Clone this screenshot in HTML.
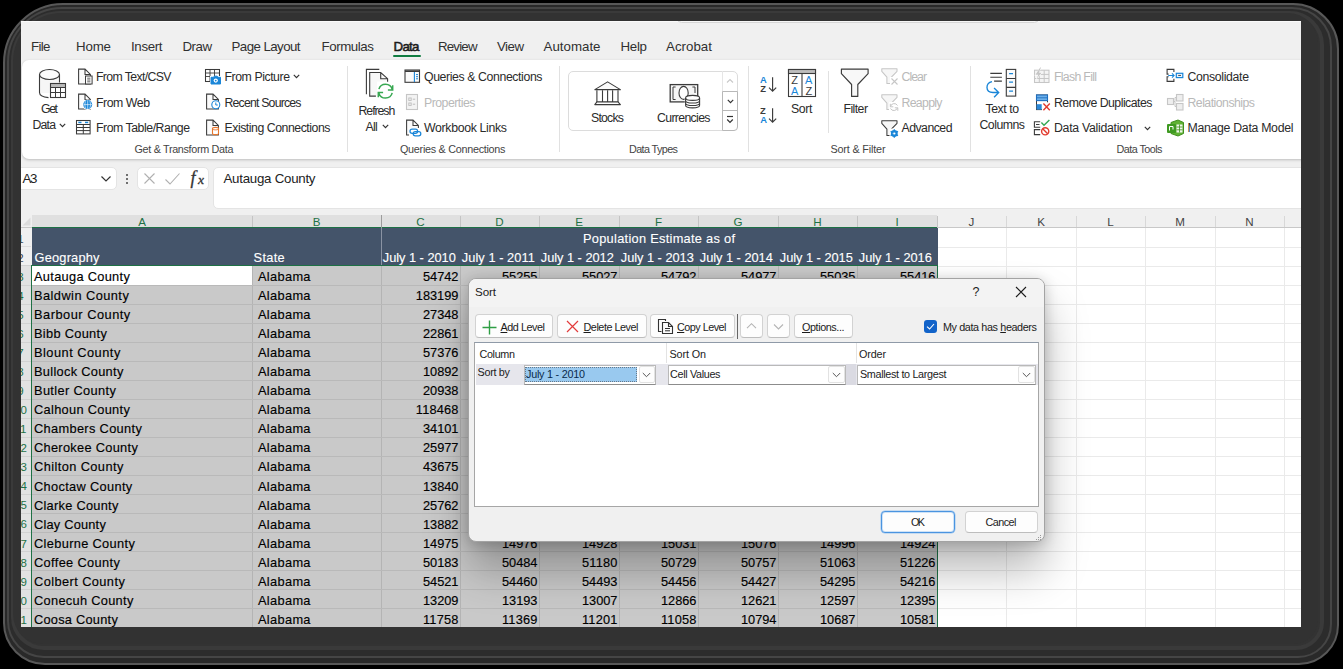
<!DOCTYPE html>
<html><head><meta charset="utf-8"><title>Sort</title>
<style>
*{box-sizing:border-box;margin:0;padding:0}
html,body{width:1343px;height:669px;overflow:hidden;background:#000}
body{font-family:"Liberation Sans",sans-serif;color:#242424;position:relative}
#frame{position:absolute;left:3px;top:3px;width:1336px;height:662px;border-radius:60px 46px 40px 42px;background:#292929;border:2px solid #585858;filter:blur(.5px)}
#f2{position:absolute;left:7px;top:7px;width:1325px;height:651px;border-radius:55px 40px 34px 37px;background:#2c2c2c;border:2.5px solid #454545;filter:blur(.7px)}
#f3{position:absolute;left:11px;top:11px;width:1313px;height:639px;border-radius:50px 34px 28px 33px;background:#333;border:4px solid #3a3a3a;filter:blur(.7px)}
#f4{position:absolute;left:13px;top:13px;width:1305px;height:631px;border-radius:48px 30px 24px 30px;background:#323232}
#app{position:absolute;left:21px;top:21px;width:1280px;height:606px;background:#f0f0f0;overflow:hidden}
#in{position:absolute;left:-21px;top:-21px;width:1343px;height:669px}
.t{position:absolute;white-space:nowrap;color:#242424}
.b{position:absolute}
.dis{color:#b8b8b8}
.u{text-decoration:underline;text-underline-offset:1px}

</style></head>
<body>
<div id="frame"></div><div id="f2"></div><div id="f3"></div><div id="f4"></div>
<div id="app"><div id="in">
<div class="b " style="left:21px;top:21px;width:1299px;height:1px;background:#fafafa"></div>
<div class="b " style="left:677px;top:14px;width:362px;height:9px;background:#f7f7f7;border:1px solid #d6d6d6;border-radius:5px"></div>
<div class="t " style="top:38.26px;font-size:13.3px;line-height:17px;letter-spacing:-0.644px;color:#303030;left:31.00px;">File</div>
<div class="t " style="top:38.26px;font-size:13.3px;line-height:17px;letter-spacing:-0.159px;color:#303030;left:76.00px;">Home</div>
<div class="t " style="top:38.26px;font-size:13.3px;line-height:17px;letter-spacing:-0.353px;color:#303030;left:131.00px;">Insert</div>
<div class="t " style="top:38.26px;font-size:13.3px;line-height:17px;letter-spacing:-0.512px;color:#303030;left:182.50px;">Draw</div>
<div class="t " style="top:38.26px;font-size:13.3px;line-height:17px;letter-spacing:-0.569px;color:#303030;left:231.50px;">Page Layout</div>
<div class="t " style="top:38.26px;font-size:13.3px;line-height:17px;letter-spacing:-0.418px;color:#303030;left:321.50px;">Formulas</div>
<div class="t " style="top:38.26px;font-size:13.3px;line-height:17px;letter-spacing:-0.698px;color:#1a1a1a;-webkit-text-stroke:0.55px #1a1a1a;left:393.50px;">Data</div>
<div class="t " style="top:38.26px;font-size:13.3px;line-height:17px;letter-spacing:-0.822px;color:#303030;left:438.00px;">Review</div>
<div class="t " style="top:38.26px;font-size:13.3px;line-height:17px;letter-spacing:-0.529px;color:#303030;left:497.00px;">View</div>
<div class="t " style="top:38.26px;font-size:13.3px;line-height:17px;letter-spacing:0.010px;color:#303030;left:543.50px;">Automate</div>
<div class="t " style="top:38.26px;font-size:13.3px;line-height:17px;letter-spacing:-0.285px;color:#303030;left:620.50px;">Help</div>
<div class="t " style="top:38.26px;font-size:13.3px;line-height:17px;letter-spacing:0.027px;color:#303030;left:666.00px;">Acrobat</div>
<div class="b " style="left:393px;top:55px;width:27.5px;height:2px;background:#107c41;border-radius:1px"></div>
<div class="b " style="left:21.5px;top:60px;width:1298.5px;height:99px;background:#fff;border-radius:7px;box-shadow:0 1px 3px rgba(0,0,0,.22)"></div>
<div class="b " style="left:347px;top:66px;width:1px;height:86px;background:#e1e1e1"></div>
<div class="b " style="left:559px;top:66px;width:1px;height:86px;background:#e1e1e1"></div>
<div class="b " style="left:748px;top:66px;width:1px;height:86px;background:#e1e1e1"></div>
<div class="b " style="left:969.5px;top:66px;width:1.0px;height:86px;background:#e1e1e1"></div>
<div class="b " style="left:828px;top:71px;width:1px;height:62px;background:#e1e1e1"></div>
<div class="b " style="left:15px;top:167px;width:102px;height:23px;background:#fff;border-radius:0 5px 5px 0;border:1px solid #e4e4e4"></div>
<div class="t " style="top:170.26px;font-size:13.3px;line-height:17px;letter-spacing:-1.268px;color:#222;left:22.50px;">A3</div>
<svg class="b" style="left:100px;top:174px;" width="12" height="10" viewBox="0 0 12 10" fill="none"><path d="M1.5 2.5 L6 7 L10.5 2.5" stroke="#333" stroke-width="1.2"/></svg>
<div class="b " style="left:126px;top:174px;width:2px;height:2px;background:#444;border-radius:1px"></div>
<div class="b " style="left:126px;top:178px;width:2px;height:2px;background:#444;border-radius:1px"></div>
<div class="b " style="left:126px;top:182px;width:2px;height:2px;background:#444;border-radius:1px"></div>
<div class="b " style="left:137px;top:167px;width:72px;height:23px;background:#fff;border-radius:5px;border:1px solid #e4e4e4"></div>
<svg class="b" style="left:143px;top:172px;" width="14" height="14" viewBox="0 0 14 14" fill="none"><path d="M1.5 1.5 L11.5 11.5 M11.5 1.5 L1.5 11.5" stroke="#b0b0b0" stroke-width="1.1"/></svg>
<svg class="b" style="left:164px;top:172px;" width="18" height="14" viewBox="0 0 18 14" fill="none"><path d="M1.5 7.5 L6 12 L15.5 1.5" stroke="#b0b0b0" stroke-width="1.1"/></svg>
<div class="t " style="top:167.44px;font-size:18px;line-height:23px;color:#333;-webkit-text-stroke:0.3px #333;left:190.50px;font-family:'Liberation Serif',serif;font-style:italic;">f</div>
<div class="t " style="top:171.13px;font-size:13.5px;line-height:18px;color:#333;-webkit-text-stroke:0.3px #333;left:198.00px;font-family:'Liberation Serif',serif;font-style:italic;">x</div>
<div class="b " style="left:213px;top:167px;width:1107px;height:41.5px;background:#fff;border-radius:5px 0 0 5px;border:1px solid #e4e4e4"></div>
<div class="t " style="top:170.26px;font-size:13.3px;line-height:17px;letter-spacing:-0.260px;color:#222;left:223.50px;">Autauga County</div>
<div class="b " style="left:21px;top:215px;width:1299px;height:425px;background:#fff"></div>
<div class="b " style="left:21px;top:215px;width:1299px;height:13px;background:#f0f0f0"></div>
<div class="b " style="left:32px;top:215px;width:905px;height:12px;background:#e0e0e0"></div>
<div class="b " style="left:21px;top:227px;width:1299px;height:1px;background:#c8c8c8"></div>
<div class="b " style="left:32px;top:227px;width:905px;height:1px;background:#1e7145"></div>
<svg class="b" style="left:21px;top:215px;" width="11" height="12" viewBox="0 0 11 12" fill="none"><path d="M9.5 2.5 L9.5 10.5 L1.5 10.5 Z" fill="#dcdcdc"/></svg>
<div class="t " style="top:214.45px;font-size:11.6px;line-height:15px;color:#1e7145;left:-158.00px;width:600px;text-align:center;">A</div>
<div class="b " style="left:252px;top:216px;width:1px;height:11px;background:#c4c4c4"></div>
<div class="t " style="top:214.45px;font-size:11.6px;line-height:15px;color:#1e7145;left:16.50px;width:600px;text-align:center;">B</div>
<div class="b " style="left:381px;top:216px;width:1px;height:11px;background:#c4c4c4"></div>
<div class="t " style="top:214.45px;font-size:11.6px;line-height:15px;color:#1e7145;left:120.50px;width:600px;text-align:center;">C</div>
<div class="b " style="left:460px;top:216px;width:1px;height:11px;background:#c4c4c4"></div>
<div class="t " style="top:214.45px;font-size:11.6px;line-height:15px;color:#1e7145;left:199.50px;width:600px;text-align:center;">D</div>
<div class="b " style="left:539px;top:216px;width:1px;height:11px;background:#c4c4c4"></div>
<div class="t " style="top:214.45px;font-size:11.6px;line-height:15px;color:#1e7145;left:279.00px;width:600px;text-align:center;">E</div>
<div class="b " style="left:619px;top:216px;width:1px;height:11px;background:#c4c4c4"></div>
<div class="t " style="top:214.45px;font-size:11.6px;line-height:15px;color:#1e7145;left:358.50px;width:600px;text-align:center;">F</div>
<div class="b " style="left:698px;top:216px;width:1px;height:11px;background:#c4c4c4"></div>
<div class="t " style="top:214.45px;font-size:11.6px;line-height:15px;color:#1e7145;left:438.00px;width:600px;text-align:center;">G</div>
<div class="b " style="left:778px;top:216px;width:1px;height:11px;background:#c4c4c4"></div>
<div class="t " style="top:214.45px;font-size:11.6px;line-height:15px;color:#1e7145;left:517.50px;width:600px;text-align:center;">H</div>
<div class="b " style="left:857px;top:216px;width:1px;height:11px;background:#c4c4c4"></div>
<div class="t " style="top:214.45px;font-size:11.6px;line-height:15px;color:#1e7145;left:597.00px;width:600px;text-align:center;">I</div>
<div class="b " style="left:937px;top:216px;width:1px;height:11px;background:#c4c4c4"></div>
<div class="t " style="top:214.45px;font-size:11.6px;line-height:15px;color:#444;left:671.50px;width:600px;text-align:center;">J</div>
<div class="b " style="left:1006px;top:216px;width:1px;height:11px;background:#d8d8d8"></div>
<div class="t " style="top:214.45px;font-size:11.6px;line-height:15px;color:#444;left:741.00px;width:600px;text-align:center;">K</div>
<div class="b " style="left:1076px;top:216px;width:1px;height:11px;background:#d8d8d8"></div>
<div class="t " style="top:214.45px;font-size:11.6px;line-height:15px;color:#444;left:810.50px;width:600px;text-align:center;">L</div>
<div class="b " style="left:1145px;top:216px;width:1px;height:11px;background:#d8d8d8"></div>
<div class="t " style="top:214.45px;font-size:11.6px;line-height:15px;color:#444;left:880.00px;width:600px;text-align:center;">M</div>
<div class="b " style="left:1215px;top:216px;width:1px;height:11px;background:#d8d8d8"></div>
<div class="t " style="top:214.45px;font-size:11.6px;line-height:15px;color:#444;left:949.50px;width:600px;text-align:center;">N</div>
<div class="b " style="left:1284px;top:216px;width:1px;height:11px;background:#d8d8d8"></div>
<div class="b " style="left:21px;top:228px;width:11px;height:412px;background:#f0f0f0"></div>
<div class="b " style="left:21px;top:266px;width:10px;height:374px;background:#e2e2e2"></div>
<div class="b " style="left:937px;top:228px;width:1px;height:412px;background:#eaeaea"></div>
<div class="b " style="left:1006px;top:228px;width:1px;height:412px;background:#eaeaea"></div>
<div class="b " style="left:1076px;top:228px;width:1px;height:412px;background:#eaeaea"></div>
<div class="b " style="left:1145px;top:228px;width:1px;height:412px;background:#eaeaea"></div>
<div class="b " style="left:1215px;top:228px;width:1px;height:412px;background:#eaeaea"></div>
<div class="b " style="left:1284px;top:228px;width:1px;height:412px;background:#eaeaea"></div>
<div class="b " style="left:938px;top:247px;width:382px;height:1px;background:#eaeaea"></div>
<div class="b " style="left:938px;top:266px;width:382px;height:1px;background:#eaeaea"></div>
<div class="b " style="left:938px;top:285px;width:382px;height:1px;background:#eaeaea"></div>
<div class="b " style="left:938px;top:304px;width:382px;height:1px;background:#eaeaea"></div>
<div class="b " style="left:938px;top:323px;width:382px;height:1px;background:#eaeaea"></div>
<div class="b " style="left:938px;top:342px;width:382px;height:1px;background:#eaeaea"></div>
<div class="b " style="left:938px;top:361px;width:382px;height:1px;background:#eaeaea"></div>
<div class="b " style="left:938px;top:380px;width:382px;height:1px;background:#eaeaea"></div>
<div class="b " style="left:938px;top:399px;width:382px;height:1px;background:#eaeaea"></div>
<div class="b " style="left:938px;top:418px;width:382px;height:1px;background:#eaeaea"></div>
<div class="b " style="left:938px;top:437px;width:382px;height:1px;background:#eaeaea"></div>
<div class="b " style="left:938px;top:456px;width:382px;height:1px;background:#eaeaea"></div>
<div class="b " style="left:938px;top:475px;width:382px;height:1px;background:#eaeaea"></div>
<div class="b " style="left:938px;top:494px;width:382px;height:1px;background:#eaeaea"></div>
<div class="b " style="left:938px;top:513px;width:382px;height:1px;background:#eaeaea"></div>
<div class="b " style="left:938px;top:532px;width:382px;height:1px;background:#eaeaea"></div>
<div class="b " style="left:938px;top:551px;width:382px;height:1px;background:#eaeaea"></div>
<div class="b " style="left:938px;top:570px;width:382px;height:1px;background:#eaeaea"></div>
<div class="b " style="left:938px;top:589px;width:382px;height:1px;background:#eaeaea"></div>
<div class="b " style="left:938px;top:608px;width:382px;height:1px;background:#eaeaea"></div>
<div class="b " style="left:938px;top:627px;width:382px;height:1px;background:#eaeaea"></div>
<div class="b " style="left:938px;top:646px;width:382px;height:1px;background:#eaeaea"></div>
<div class="b " style="left:31.5px;top:228px;width:906.0px;height:37px;background:#44546a"></div>
<div class="b " style="left:380.5px;top:215px;width:1.5px;height:13px;background:#9c9c9c"></div>
<div class="b " style="left:380.5px;top:228px;width:1.5px;height:37px;background:#8a93a3"></div>
<div class="b " style="left:32px;top:266px;width:905px;height:374px;background:#c9c9c9"></div>
<div class="b " style="left:32px;top:266px;width:220px;height:19px;background:#fff"></div>
<div class="b " style="left:252px;top:266px;width:1px;height:374px;background:#b4b4b4"></div>
<div class="b " style="left:381px;top:266px;width:1px;height:374px;background:#b4b4b4"></div>
<div class="b " style="left:460px;top:266px;width:1px;height:374px;background:#b4b4b4"></div>
<div class="b " style="left:539px;top:266px;width:1px;height:374px;background:#b4b4b4"></div>
<div class="b " style="left:619px;top:266px;width:1px;height:374px;background:#b4b4b4"></div>
<div class="b " style="left:698px;top:266px;width:1px;height:374px;background:#b4b4b4"></div>
<div class="b " style="left:778px;top:266px;width:1px;height:374px;background:#b4b4b4"></div>
<div class="b " style="left:857px;top:266px;width:1px;height:374px;background:#b4b4b4"></div>
<div class="b " style="left:32px;top:285px;width:905px;height:1px;background:#b9b9b9"></div>
<div class="b " style="left:21px;top:285px;width:10px;height:1px;background:#d2d2d2"></div>
<div class="b " style="left:32px;top:304px;width:905px;height:1px;background:#b9b9b9"></div>
<div class="b " style="left:21px;top:304px;width:10px;height:1px;background:#d2d2d2"></div>
<div class="b " style="left:32px;top:323px;width:905px;height:1px;background:#b9b9b9"></div>
<div class="b " style="left:21px;top:323px;width:10px;height:1px;background:#d2d2d2"></div>
<div class="b " style="left:32px;top:342px;width:905px;height:1px;background:#b9b9b9"></div>
<div class="b " style="left:21px;top:342px;width:10px;height:1px;background:#d2d2d2"></div>
<div class="b " style="left:32px;top:361px;width:905px;height:1px;background:#b9b9b9"></div>
<div class="b " style="left:21px;top:361px;width:10px;height:1px;background:#d2d2d2"></div>
<div class="b " style="left:32px;top:380px;width:905px;height:1px;background:#b9b9b9"></div>
<div class="b " style="left:21px;top:380px;width:10px;height:1px;background:#d2d2d2"></div>
<div class="b " style="left:32px;top:399px;width:905px;height:1px;background:#b9b9b9"></div>
<div class="b " style="left:21px;top:399px;width:10px;height:1px;background:#d2d2d2"></div>
<div class="b " style="left:32px;top:418px;width:905px;height:1px;background:#b9b9b9"></div>
<div class="b " style="left:21px;top:418px;width:10px;height:1px;background:#d2d2d2"></div>
<div class="b " style="left:32px;top:437px;width:905px;height:1px;background:#b9b9b9"></div>
<div class="b " style="left:21px;top:437px;width:10px;height:1px;background:#d2d2d2"></div>
<div class="b " style="left:32px;top:456px;width:905px;height:1px;background:#b9b9b9"></div>
<div class="b " style="left:21px;top:456px;width:10px;height:1px;background:#d2d2d2"></div>
<div class="b " style="left:32px;top:475px;width:905px;height:1px;background:#b9b9b9"></div>
<div class="b " style="left:21px;top:475px;width:10px;height:1px;background:#d2d2d2"></div>
<div class="b " style="left:32px;top:494px;width:905px;height:1px;background:#b9b9b9"></div>
<div class="b " style="left:21px;top:494px;width:10px;height:1px;background:#d2d2d2"></div>
<div class="b " style="left:32px;top:513px;width:905px;height:1px;background:#b9b9b9"></div>
<div class="b " style="left:21px;top:513px;width:10px;height:1px;background:#d2d2d2"></div>
<div class="b " style="left:32px;top:532px;width:905px;height:1px;background:#b9b9b9"></div>
<div class="b " style="left:21px;top:532px;width:10px;height:1px;background:#d2d2d2"></div>
<div class="b " style="left:32px;top:551px;width:905px;height:1px;background:#b9b9b9"></div>
<div class="b " style="left:21px;top:551px;width:10px;height:1px;background:#d2d2d2"></div>
<div class="b " style="left:32px;top:570px;width:905px;height:1px;background:#b9b9b9"></div>
<div class="b " style="left:21px;top:570px;width:10px;height:1px;background:#d2d2d2"></div>
<div class="b " style="left:32px;top:589px;width:905px;height:1px;background:#b9b9b9"></div>
<div class="b " style="left:21px;top:589px;width:10px;height:1px;background:#d2d2d2"></div>
<div class="b " style="left:32px;top:608px;width:905px;height:1px;background:#b9b9b9"></div>
<div class="b " style="left:21px;top:608px;width:10px;height:1px;background:#d2d2d2"></div>
<div class="b " style="left:32px;top:627px;width:905px;height:1px;background:#b9b9b9"></div>
<div class="b " style="left:21px;top:627px;width:10px;height:1px;background:#d2d2d2"></div>
<div class="b " style="left:32px;top:646px;width:905px;height:1px;background:#b9b9b9"></div>
<div class="b " style="left:21px;top:646px;width:10px;height:1px;background:#d2d2d2"></div>
<div class="b " style="left:21px;top:246px;width:10px;height:1px;background:#dedede"></div>
<div class="b " style="left:21px;top:265px;width:10px;height:1px;background:#d2d2d2"></div>
<div class="b " style="left:31px;top:265px;width:1px;height:375px;background:#1e7145"></div>
<div class="b " style="left:937px;top:265px;width:1px;height:375px;background:#1e7145"></div>
<div class="b " style="left:32px;top:265px;width:906px;height:1.3000000000000114px;background:#1e7145"></div>
<div class="t " style="top:230.08px;font-size:12.8px;line-height:17px;letter-spacing:0.285px;color:#fff;-webkit-text-stroke:0.12px #fff;left:583.00px;">Population Estimate as of</div>
<div class="t " style="top:249.08px;font-size:12.8px;line-height:17px;letter-spacing:0.209px;color:#fff;-webkit-text-stroke:0.12px #fff;left:34.50px;">Geography</div>
<div class="t " style="top:249.08px;font-size:12.8px;line-height:17px;letter-spacing:0.278px;color:#fff;-webkit-text-stroke:0.12px #fff;left:253.60px;">State</div>
<div class="t " style="top:249.08px;font-size:12.8px;line-height:17px;letter-spacing:-0.024px;color:#fff;-webkit-text-stroke:0.12px #fff;left:382.80px;">July 1 - 2010</div>
<div class="t " style="top:249.08px;font-size:12.8px;line-height:17px;letter-spacing:0.055px;color:#fff;-webkit-text-stroke:0.12px #fff;left:461.80px;">July 1 - 2011</div>
<div class="t " style="top:249.08px;font-size:12.8px;line-height:17px;letter-spacing:-0.024px;color:#fff;-webkit-text-stroke:0.12px #fff;left:540.80px;">July 1 - 2012</div>
<div class="t " style="top:249.08px;font-size:12.8px;line-height:17px;letter-spacing:-0.024px;color:#fff;-webkit-text-stroke:0.12px #fff;left:620.80px;">July 1 - 2013</div>
<div class="t " style="top:249.08px;font-size:12.8px;line-height:17px;letter-spacing:-0.024px;color:#fff;-webkit-text-stroke:0.12px #fff;left:699.80px;">July 1 - 2014</div>
<div class="t " style="top:249.08px;font-size:12.8px;line-height:17px;letter-spacing:-0.024px;color:#fff;-webkit-text-stroke:0.12px #fff;left:779.80px;">July 1 - 2015</div>
<div class="t " style="top:249.08px;font-size:12.8px;line-height:17px;letter-spacing:-0.024px;color:#fff;-webkit-text-stroke:0.12px #fff;left:858.80px;">July 1 - 2016</div>
<div class="t " style="top:267.93px;font-size:12.8px;line-height:17px;letter-spacing:0.308px;color:#000;-webkit-text-stroke:0.15px #000;left:34.00px;">Autauga County</div>
<div class="t " style="top:267.93px;font-size:12.8px;line-height:17px;letter-spacing:0.330px;color:#000;-webkit-text-stroke:0.15px #000;left:258.00px;">Alabama</div>
<div class="t " style="top:267.93px;font-size:12.8px;line-height:17px;letter-spacing:-0.049px;color:#000;-webkit-text-stroke:0.15px #000;right:884.65px;">54742</div>
<div class="t " style="top:267.93px;font-size:12.8px;line-height:17px;letter-spacing:-0.049px;color:#000;-webkit-text-stroke:0.15px #000;right:805.65px;">55255</div>
<div class="t " style="top:267.93px;font-size:12.8px;line-height:17px;letter-spacing:-0.049px;color:#000;-webkit-text-stroke:0.15px #000;right:725.65px;">55027</div>
<div class="t " style="top:267.93px;font-size:12.8px;line-height:17px;letter-spacing:-0.049px;color:#000;-webkit-text-stroke:0.15px #000;right:646.65px;">54792</div>
<div class="t " style="top:267.93px;font-size:12.8px;line-height:17px;letter-spacing:-0.049px;color:#000;-webkit-text-stroke:0.15px #000;right:566.65px;">54977</div>
<div class="t " style="top:267.93px;font-size:12.8px;line-height:17px;letter-spacing:-0.049px;color:#000;-webkit-text-stroke:0.15px #000;right:487.65px;">55035</div>
<div class="t " style="top:267.93px;font-size:12.8px;line-height:17px;letter-spacing:-0.049px;color:#000;-webkit-text-stroke:0.15px #000;right:407.65px;">55416</div>
<div class="t " style="top:286.99px;font-size:12.8px;line-height:17px;letter-spacing:0.451px;color:#000;-webkit-text-stroke:0.15px #000;left:34.00px;">Baldwin County</div>
<div class="t " style="top:286.99px;font-size:12.8px;line-height:17px;letter-spacing:0.330px;color:#000;-webkit-text-stroke:0.15px #000;left:258.00px;">Alabama</div>
<div class="t " style="top:286.99px;font-size:12.8px;line-height:17px;letter-spacing:-0.023px;color:#000;-webkit-text-stroke:0.15px #000;right:884.62px;">183199</div>
<div class="t " style="top:286.99px;font-size:12.8px;line-height:17px;letter-spacing:-0.023px;color:#000;-webkit-text-stroke:0.15px #000;right:805.62px;">186659</div>
<div class="t " style="top:286.99px;font-size:12.8px;line-height:17px;letter-spacing:-0.023px;color:#000;-webkit-text-stroke:0.15px #000;right:725.62px;">190396</div>
<div class="t " style="top:286.99px;font-size:12.8px;line-height:17px;letter-spacing:-0.023px;color:#000;-webkit-text-stroke:0.15px #000;right:646.62px;">195126</div>
<div class="t " style="top:286.99px;font-size:12.8px;line-height:17px;letter-spacing:-0.023px;color:#000;-webkit-text-stroke:0.15px #000;right:566.62px;">199713</div>
<div class="t " style="top:286.99px;font-size:12.8px;line-height:17px;letter-spacing:-0.023px;color:#000;-webkit-text-stroke:0.15px #000;right:487.62px;">203709</div>
<div class="t " style="top:286.99px;font-size:12.8px;line-height:17px;letter-spacing:-0.023px;color:#000;-webkit-text-stroke:0.15px #000;right:407.62px;">208563</div>
<div class="t " style="top:306.04px;font-size:12.8px;line-height:17px;letter-spacing:0.511px;color:#000;-webkit-text-stroke:0.15px #000;left:34.00px;">Barbour County</div>
<div class="t " style="top:306.04px;font-size:12.8px;line-height:17px;letter-spacing:0.330px;color:#000;-webkit-text-stroke:0.15px #000;left:258.00px;">Alabama</div>
<div class="t " style="top:306.04px;font-size:12.8px;line-height:17px;letter-spacing:-0.049px;color:#000;-webkit-text-stroke:0.15px #000;right:884.65px;">27348</div>
<div class="t " style="top:306.04px;font-size:12.8px;line-height:17px;letter-spacing:-0.049px;color:#000;-webkit-text-stroke:0.15px #000;right:805.65px;">27326</div>
<div class="t " style="top:306.04px;font-size:12.8px;line-height:17px;letter-spacing:-0.049px;color:#000;-webkit-text-stroke:0.15px #000;right:725.65px;">27132</div>
<div class="t " style="top:306.04px;font-size:12.8px;line-height:17px;letter-spacing:-0.049px;color:#000;-webkit-text-stroke:0.15px #000;right:646.65px;">26938</div>
<div class="t " style="top:306.04px;font-size:12.8px;line-height:17px;letter-spacing:-0.049px;color:#000;-webkit-text-stroke:0.15px #000;right:566.65px;">26763</div>
<div class="t " style="top:306.04px;font-size:12.8px;line-height:17px;letter-spacing:-0.049px;color:#000;-webkit-text-stroke:0.15px #000;right:487.65px;">26270</div>
<div class="t " style="top:306.04px;font-size:12.8px;line-height:17px;letter-spacing:-0.049px;color:#000;-webkit-text-stroke:0.15px #000;right:407.65px;">25965</div>
<div class="t " style="top:325.10px;font-size:12.8px;line-height:17px;letter-spacing:0.307px;color:#000;-webkit-text-stroke:0.15px #000;left:34.00px;">Bibb County</div>
<div class="t " style="top:325.10px;font-size:12.8px;line-height:17px;letter-spacing:0.330px;color:#000;-webkit-text-stroke:0.15px #000;left:258.00px;">Alabama</div>
<div class="t " style="top:325.10px;font-size:12.8px;line-height:17px;letter-spacing:-0.049px;color:#000;-webkit-text-stroke:0.15px #000;right:884.65px;">22861</div>
<div class="t " style="top:325.10px;font-size:12.8px;line-height:17px;letter-spacing:-0.049px;color:#000;-webkit-text-stroke:0.15px #000;right:805.65px;">22733</div>
<div class="t " style="top:325.10px;font-size:12.8px;line-height:17px;letter-spacing:-0.049px;color:#000;-webkit-text-stroke:0.15px #000;right:725.65px;">22642</div>
<div class="t " style="top:325.10px;font-size:12.8px;line-height:17px;letter-spacing:-0.049px;color:#000;-webkit-text-stroke:0.15px #000;right:646.65px;">22512</div>
<div class="t " style="top:325.10px;font-size:12.8px;line-height:17px;letter-spacing:-0.049px;color:#000;-webkit-text-stroke:0.15px #000;right:566.65px;">22506</div>
<div class="t " style="top:325.10px;font-size:12.8px;line-height:17px;letter-spacing:-0.049px;color:#000;-webkit-text-stroke:0.15px #000;right:487.65px;">22541</div>
<div class="t " style="top:325.10px;font-size:12.8px;line-height:17px;letter-spacing:-0.049px;color:#000;-webkit-text-stroke:0.15px #000;right:407.65px;">22643</div>
<div class="t " style="top:344.15px;font-size:12.8px;line-height:17px;letter-spacing:0.491px;color:#000;-webkit-text-stroke:0.15px #000;left:34.00px;">Blount County</div>
<div class="t " style="top:344.15px;font-size:12.8px;line-height:17px;letter-spacing:0.330px;color:#000;-webkit-text-stroke:0.15px #000;left:258.00px;">Alabama</div>
<div class="t " style="top:344.15px;font-size:12.8px;line-height:17px;letter-spacing:-0.049px;color:#000;-webkit-text-stroke:0.15px #000;right:884.65px;">57376</div>
<div class="t " style="top:344.15px;font-size:12.8px;line-height:17px;letter-spacing:-0.049px;color:#000;-webkit-text-stroke:0.15px #000;right:805.65px;">57707</div>
<div class="t " style="top:344.15px;font-size:12.8px;line-height:17px;letter-spacing:-0.049px;color:#000;-webkit-text-stroke:0.15px #000;right:725.65px;">57772</div>
<div class="t " style="top:344.15px;font-size:12.8px;line-height:17px;letter-spacing:-0.049px;color:#000;-webkit-text-stroke:0.15px #000;right:646.65px;">57746</div>
<div class="t " style="top:344.15px;font-size:12.8px;line-height:17px;letter-spacing:-0.049px;color:#000;-webkit-text-stroke:0.15px #000;right:566.65px;">57621</div>
<div class="t " style="top:344.15px;font-size:12.8px;line-height:17px;letter-spacing:-0.049px;color:#000;-webkit-text-stroke:0.15px #000;right:487.65px;">57676</div>
<div class="t " style="top:344.15px;font-size:12.8px;line-height:17px;letter-spacing:-0.049px;color:#000;-webkit-text-stroke:0.15px #000;right:407.65px;">57704</div>
<div class="t " style="top:363.21px;font-size:12.8px;line-height:17px;letter-spacing:0.302px;color:#000;-webkit-text-stroke:0.15px #000;left:34.00px;">Bullock County</div>
<div class="t " style="top:363.21px;font-size:12.8px;line-height:17px;letter-spacing:0.330px;color:#000;-webkit-text-stroke:0.15px #000;left:258.00px;">Alabama</div>
<div class="t " style="top:363.21px;font-size:12.8px;line-height:17px;letter-spacing:-0.049px;color:#000;-webkit-text-stroke:0.15px #000;right:884.65px;">10892</div>
<div class="t " style="top:363.21px;font-size:12.8px;line-height:17px;letter-spacing:-0.049px;color:#000;-webkit-text-stroke:0.15px #000;right:805.65px;">10722</div>
<div class="t " style="top:363.21px;font-size:12.8px;line-height:17px;letter-spacing:-0.049px;color:#000;-webkit-text-stroke:0.15px #000;right:725.65px;">10654</div>
<div class="t " style="top:363.21px;font-size:12.8px;line-height:17px;letter-spacing:-0.049px;color:#000;-webkit-text-stroke:0.15px #000;right:646.65px;">10576</div>
<div class="t " style="top:363.21px;font-size:12.8px;line-height:17px;letter-spacing:-0.049px;color:#000;-webkit-text-stroke:0.15px #000;right:566.65px;">10712</div>
<div class="t " style="top:363.21px;font-size:12.8px;line-height:17px;letter-spacing:-0.049px;color:#000;-webkit-text-stroke:0.15px #000;right:487.65px;">10455</div>
<div class="t " style="top:363.21px;font-size:12.8px;line-height:17px;letter-spacing:-0.049px;color:#000;-webkit-text-stroke:0.15px #000;right:407.65px;">10362</div>
<div class="t " style="top:382.26px;font-size:12.8px;line-height:17px;letter-spacing:0.354px;color:#000;-webkit-text-stroke:0.15px #000;left:34.00px;">Butler County</div>
<div class="t " style="top:382.26px;font-size:12.8px;line-height:17px;letter-spacing:0.330px;color:#000;-webkit-text-stroke:0.15px #000;left:258.00px;">Alabama</div>
<div class="t " style="top:382.26px;font-size:12.8px;line-height:17px;letter-spacing:-0.049px;color:#000;-webkit-text-stroke:0.15px #000;right:884.65px;">20938</div>
<div class="t " style="top:382.26px;font-size:12.8px;line-height:17px;letter-spacing:-0.049px;color:#000;-webkit-text-stroke:0.15px #000;right:805.65px;">20848</div>
<div class="t " style="top:382.26px;font-size:12.8px;line-height:17px;letter-spacing:-0.049px;color:#000;-webkit-text-stroke:0.15px #000;right:725.65px;">20665</div>
<div class="t " style="top:382.26px;font-size:12.8px;line-height:17px;letter-spacing:-0.049px;color:#000;-webkit-text-stroke:0.15px #000;right:646.65px;">20330</div>
<div class="t " style="top:382.26px;font-size:12.8px;line-height:17px;letter-spacing:-0.049px;color:#000;-webkit-text-stroke:0.15px #000;right:566.65px;">20283</div>
<div class="t " style="top:382.26px;font-size:12.8px;line-height:17px;letter-spacing:-0.049px;color:#000;-webkit-text-stroke:0.15px #000;right:487.65px;">20126</div>
<div class="t " style="top:382.26px;font-size:12.8px;line-height:17px;letter-spacing:-0.049px;color:#000;-webkit-text-stroke:0.15px #000;right:407.65px;">19998</div>
<div class="t " style="top:401.32px;font-size:12.8px;line-height:17px;letter-spacing:0.308px;color:#000;-webkit-text-stroke:0.15px #000;left:34.00px;">Calhoun County</div>
<div class="t " style="top:401.32px;font-size:12.8px;line-height:17px;letter-spacing:0.330px;color:#000;-webkit-text-stroke:0.15px #000;left:258.00px;">Alabama</div>
<div class="t " style="top:401.32px;font-size:12.8px;line-height:17px;letter-spacing:0.167px;color:#000;-webkit-text-stroke:0.15px #000;right:884.43px;">118468</div>
<div class="t " style="top:401.32px;font-size:12.8px;line-height:17px;letter-spacing:0.167px;color:#000;-webkit-text-stroke:0.15px #000;right:805.43px;">117736</div>
<div class="t " style="top:401.32px;font-size:12.8px;line-height:17px;letter-spacing:0.167px;color:#000;-webkit-text-stroke:0.15px #000;right:725.43px;">117208</div>
<div class="t " style="top:401.32px;font-size:12.8px;line-height:17px;letter-spacing:0.167px;color:#000;-webkit-text-stroke:0.15px #000;right:646.43px;">116475</div>
<div class="t " style="top:401.32px;font-size:12.8px;line-height:17px;letter-spacing:0.167px;color:#000;-webkit-text-stroke:0.15px #000;right:566.43px;">115837</div>
<div class="t " style="top:401.32px;font-size:12.8px;line-height:17px;letter-spacing:0.167px;color:#000;-webkit-text-stroke:0.15px #000;right:487.43px;">115285</div>
<div class="t " style="top:401.32px;font-size:12.8px;line-height:17px;letter-spacing:0.357px;color:#000;-webkit-text-stroke:0.15px #000;right:407.24px;">114611</div>
<div class="t " style="top:420.37px;font-size:12.8px;line-height:17px;letter-spacing:0.332px;color:#000;-webkit-text-stroke:0.15px #000;left:34.00px;">Chambers County</div>
<div class="t " style="top:420.37px;font-size:12.8px;line-height:17px;letter-spacing:0.330px;color:#000;-webkit-text-stroke:0.15px #000;left:258.00px;">Alabama</div>
<div class="t " style="top:420.37px;font-size:12.8px;line-height:17px;letter-spacing:-0.049px;color:#000;-webkit-text-stroke:0.15px #000;right:884.65px;">34101</div>
<div class="t " style="top:420.37px;font-size:12.8px;line-height:17px;letter-spacing:-0.049px;color:#000;-webkit-text-stroke:0.15px #000;right:805.65px;">34041</div>
<div class="t " style="top:420.37px;font-size:12.8px;line-height:17px;letter-spacing:-0.049px;color:#000;-webkit-text-stroke:0.15px #000;right:725.65px;">34123</div>
<div class="t " style="top:420.37px;font-size:12.8px;line-height:17px;letter-spacing:-0.049px;color:#000;-webkit-text-stroke:0.15px #000;right:646.65px;">34137</div>
<div class="t " style="top:420.37px;font-size:12.8px;line-height:17px;letter-spacing:0.189px;color:#000;-webkit-text-stroke:0.15px #000;right:566.41px;">34011</div>
<div class="t " style="top:420.37px;font-size:12.8px;line-height:17px;letter-spacing:-0.049px;color:#000;-webkit-text-stroke:0.15px #000;right:487.65px;">34067</div>
<div class="t " style="top:420.37px;font-size:12.8px;line-height:17px;letter-spacing:-0.049px;color:#000;-webkit-text-stroke:0.15px #000;right:407.65px;">33843</div>
<div class="t " style="top:439.43px;font-size:12.8px;line-height:17px;letter-spacing:0.299px;color:#000;-webkit-text-stroke:0.15px #000;left:34.00px;">Cherokee County</div>
<div class="t " style="top:439.43px;font-size:12.8px;line-height:17px;letter-spacing:0.330px;color:#000;-webkit-text-stroke:0.15px #000;left:258.00px;">Alabama</div>
<div class="t " style="top:439.43px;font-size:12.8px;line-height:17px;letter-spacing:-0.049px;color:#000;-webkit-text-stroke:0.15px #000;right:884.65px;">25977</div>
<div class="t " style="top:439.43px;font-size:12.8px;line-height:17px;letter-spacing:-0.049px;color:#000;-webkit-text-stroke:0.15px #000;right:805.65px;">26019</div>
<div class="t " style="top:439.43px;font-size:12.8px;line-height:17px;letter-spacing:-0.049px;color:#000;-webkit-text-stroke:0.15px #000;right:725.65px;">25964</div>
<div class="t " style="top:439.43px;font-size:12.8px;line-height:17px;letter-spacing:-0.049px;color:#000;-webkit-text-stroke:0.15px #000;right:646.65px;">26039</div>
<div class="t " style="top:439.43px;font-size:12.8px;line-height:17px;letter-spacing:-0.049px;color:#000;-webkit-text-stroke:0.15px #000;right:566.65px;">25903</div>
<div class="t " style="top:439.43px;font-size:12.8px;line-height:17px;letter-spacing:-0.049px;color:#000;-webkit-text-stroke:0.15px #000;right:487.65px;">25725</div>
<div class="t " style="top:439.43px;font-size:12.8px;line-height:17px;letter-spacing:-0.049px;color:#000;-webkit-text-stroke:0.15px #000;right:407.65px;">25725</div>
<div class="t " style="top:458.48px;font-size:12.8px;line-height:17px;letter-spacing:0.411px;color:#000;-webkit-text-stroke:0.15px #000;left:34.00px;">Chilton County</div>
<div class="t " style="top:458.48px;font-size:12.8px;line-height:17px;letter-spacing:0.330px;color:#000;-webkit-text-stroke:0.15px #000;left:258.00px;">Alabama</div>
<div class="t " style="top:458.48px;font-size:12.8px;line-height:17px;letter-spacing:-0.049px;color:#000;-webkit-text-stroke:0.15px #000;right:884.65px;">43675</div>
<div class="t " style="top:458.48px;font-size:12.8px;line-height:17px;letter-spacing:-0.049px;color:#000;-webkit-text-stroke:0.15px #000;right:805.65px;">43703</div>
<div class="t " style="top:458.48px;font-size:12.8px;line-height:17px;letter-spacing:-0.049px;color:#000;-webkit-text-stroke:0.15px #000;right:725.65px;">43623</div>
<div class="t " style="top:458.48px;font-size:12.8px;line-height:17px;letter-spacing:-0.049px;color:#000;-webkit-text-stroke:0.15px #000;right:646.65px;">43790</div>
<div class="t " style="top:458.48px;font-size:12.8px;line-height:17px;letter-spacing:-0.049px;color:#000;-webkit-text-stroke:0.15px #000;right:566.65px;">43840</div>
<div class="t " style="top:458.48px;font-size:12.8px;line-height:17px;letter-spacing:-0.049px;color:#000;-webkit-text-stroke:0.15px #000;right:487.65px;">43864</div>
<div class="t " style="top:458.48px;font-size:12.8px;line-height:17px;letter-spacing:-0.049px;color:#000;-webkit-text-stroke:0.15px #000;right:407.65px;">43941</div>
<div class="t " style="top:477.54px;font-size:12.8px;line-height:17px;letter-spacing:0.337px;color:#000;-webkit-text-stroke:0.15px #000;left:34.00px;">Choctaw County</div>
<div class="t " style="top:477.54px;font-size:12.8px;line-height:17px;letter-spacing:0.330px;color:#000;-webkit-text-stroke:0.15px #000;left:258.00px;">Alabama</div>
<div class="t " style="top:477.54px;font-size:12.8px;line-height:17px;letter-spacing:-0.049px;color:#000;-webkit-text-stroke:0.15px #000;right:884.65px;">13840</div>
<div class="t " style="top:477.54px;font-size:12.8px;line-height:17px;letter-spacing:-0.049px;color:#000;-webkit-text-stroke:0.15px #000;right:805.65px;">13662</div>
<div class="t " style="top:477.54px;font-size:12.8px;line-height:17px;letter-spacing:-0.049px;color:#000;-webkit-text-stroke:0.15px #000;right:725.65px;">13575</div>
<div class="t " style="top:477.54px;font-size:12.8px;line-height:17px;letter-spacing:-0.049px;color:#000;-webkit-text-stroke:0.15px #000;right:646.65px;">13400</div>
<div class="t " style="top:477.54px;font-size:12.8px;line-height:17px;letter-spacing:-0.049px;color:#000;-webkit-text-stroke:0.15px #000;right:566.65px;">13297</div>
<div class="t " style="top:477.54px;font-size:12.8px;line-height:17px;letter-spacing:-0.049px;color:#000;-webkit-text-stroke:0.15px #000;right:487.65px;">13178</div>
<div class="t " style="top:477.54px;font-size:12.8px;line-height:17px;letter-spacing:-0.049px;color:#000;-webkit-text-stroke:0.15px #000;right:407.65px;">12993</div>
<div class="t " style="top:496.59px;font-size:12.8px;line-height:17px;letter-spacing:0.267px;color:#000;-webkit-text-stroke:0.15px #000;left:34.00px;">Clarke County</div>
<div class="t " style="top:496.59px;font-size:12.8px;line-height:17px;letter-spacing:0.330px;color:#000;-webkit-text-stroke:0.15px #000;left:258.00px;">Alabama</div>
<div class="t " style="top:496.59px;font-size:12.8px;line-height:17px;letter-spacing:-0.049px;color:#000;-webkit-text-stroke:0.15px #000;right:884.65px;">25762</div>
<div class="t " style="top:496.59px;font-size:12.8px;line-height:17px;letter-spacing:-0.049px;color:#000;-webkit-text-stroke:0.15px #000;right:805.65px;">25615</div>
<div class="t " style="top:496.59px;font-size:12.8px;line-height:17px;letter-spacing:-0.049px;color:#000;-webkit-text-stroke:0.15px #000;right:725.65px;">25186</div>
<div class="t " style="top:496.59px;font-size:12.8px;line-height:17px;letter-spacing:-0.049px;color:#000;-webkit-text-stroke:0.15px #000;right:646.65px;">25047</div>
<div class="t " style="top:496.59px;font-size:12.8px;line-height:17px;letter-spacing:-0.049px;color:#000;-webkit-text-stroke:0.15px #000;right:566.65px;">24853</div>
<div class="t " style="top:496.59px;font-size:12.8px;line-height:17px;letter-spacing:-0.049px;color:#000;-webkit-text-stroke:0.15px #000;right:487.65px;">24681</div>
<div class="t " style="top:496.59px;font-size:12.8px;line-height:17px;letter-spacing:-0.049px;color:#000;-webkit-text-stroke:0.15px #000;right:407.65px;">24392</div>
<div class="t " style="top:515.65px;font-size:12.8px;line-height:17px;letter-spacing:0.208px;color:#000;-webkit-text-stroke:0.15px #000;left:34.00px;">Clay County</div>
<div class="t " style="top:515.65px;font-size:12.8px;line-height:17px;letter-spacing:0.330px;color:#000;-webkit-text-stroke:0.15px #000;left:258.00px;">Alabama</div>
<div class="t " style="top:515.65px;font-size:12.8px;line-height:17px;letter-spacing:-0.049px;color:#000;-webkit-text-stroke:0.15px #000;right:884.65px;">13882</div>
<div class="t " style="top:515.65px;font-size:12.8px;line-height:17px;letter-spacing:-0.049px;color:#000;-webkit-text-stroke:0.15px #000;right:805.65px;">13690</div>
<div class="t " style="top:515.65px;font-size:12.8px;line-height:17px;letter-spacing:-0.049px;color:#000;-webkit-text-stroke:0.15px #000;right:725.65px;">13424</div>
<div class="t " style="top:515.65px;font-size:12.8px;line-height:17px;letter-spacing:-0.049px;color:#000;-webkit-text-stroke:0.15px #000;right:646.65px;">13457</div>
<div class="t " style="top:515.65px;font-size:12.8px;line-height:17px;letter-spacing:-0.049px;color:#000;-webkit-text-stroke:0.15px #000;right:566.65px;">13536</div>
<div class="t " style="top:515.65px;font-size:12.8px;line-height:17px;letter-spacing:-0.049px;color:#000;-webkit-text-stroke:0.15px #000;right:487.65px;">13537</div>
<div class="t " style="top:515.65px;font-size:12.8px;line-height:17px;letter-spacing:-0.049px;color:#000;-webkit-text-stroke:0.15px #000;right:407.65px;">13492</div>
<div class="t " style="top:534.70px;font-size:12.8px;line-height:17px;letter-spacing:0.339px;color:#000;-webkit-text-stroke:0.15px #000;left:34.00px;">Cleburne County</div>
<div class="t " style="top:534.70px;font-size:12.8px;line-height:17px;letter-spacing:0.330px;color:#000;-webkit-text-stroke:0.15px #000;left:258.00px;">Alabama</div>
<div class="t " style="top:534.70px;font-size:12.8px;line-height:17px;letter-spacing:-0.049px;color:#000;-webkit-text-stroke:0.15px #000;right:884.65px;">14975</div>
<div class="t " style="top:534.70px;font-size:12.8px;line-height:17px;letter-spacing:-0.049px;color:#000;-webkit-text-stroke:0.15px #000;right:805.65px;">14976</div>
<div class="t " style="top:534.70px;font-size:12.8px;line-height:17px;letter-spacing:-0.049px;color:#000;-webkit-text-stroke:0.15px #000;right:725.65px;">14928</div>
<div class="t " style="top:534.70px;font-size:12.8px;line-height:17px;letter-spacing:-0.049px;color:#000;-webkit-text-stroke:0.15px #000;right:646.65px;">15031</div>
<div class="t " style="top:534.70px;font-size:12.8px;line-height:17px;letter-spacing:-0.049px;color:#000;-webkit-text-stroke:0.15px #000;right:566.65px;">15076</div>
<div class="t " style="top:534.70px;font-size:12.8px;line-height:17px;letter-spacing:-0.049px;color:#000;-webkit-text-stroke:0.15px #000;right:487.65px;">14996</div>
<div class="t " style="top:534.70px;font-size:12.8px;line-height:17px;letter-spacing:-0.049px;color:#000;-webkit-text-stroke:0.15px #000;right:407.65px;">14924</div>
<div class="t " style="top:553.76px;font-size:12.8px;line-height:17px;letter-spacing:0.351px;color:#000;-webkit-text-stroke:0.15px #000;left:34.00px;">Coffee County</div>
<div class="t " style="top:553.76px;font-size:12.8px;line-height:17px;letter-spacing:0.330px;color:#000;-webkit-text-stroke:0.15px #000;left:258.00px;">Alabama</div>
<div class="t " style="top:553.76px;font-size:12.8px;line-height:17px;letter-spacing:-0.049px;color:#000;-webkit-text-stroke:0.15px #000;right:884.65px;">50183</div>
<div class="t " style="top:553.76px;font-size:12.8px;line-height:17px;letter-spacing:-0.049px;color:#000;-webkit-text-stroke:0.15px #000;right:805.65px;">50484</div>
<div class="t " style="top:553.76px;font-size:12.8px;line-height:17px;letter-spacing:0.189px;color:#000;-webkit-text-stroke:0.15px #000;right:725.41px;">51180</div>
<div class="t " style="top:553.76px;font-size:12.8px;line-height:17px;letter-spacing:-0.049px;color:#000;-webkit-text-stroke:0.15px #000;right:646.65px;">50729</div>
<div class="t " style="top:553.76px;font-size:12.8px;line-height:17px;letter-spacing:-0.049px;color:#000;-webkit-text-stroke:0.15px #000;right:566.65px;">50757</div>
<div class="t " style="top:553.76px;font-size:12.8px;line-height:17px;letter-spacing:-0.049px;color:#000;-webkit-text-stroke:0.15px #000;right:487.65px;">51063</div>
<div class="t " style="top:553.76px;font-size:12.8px;line-height:17px;letter-spacing:-0.049px;color:#000;-webkit-text-stroke:0.15px #000;right:407.65px;">51226</div>
<div class="t " style="top:572.81px;font-size:12.8px;line-height:17px;letter-spacing:0.417px;color:#000;-webkit-text-stroke:0.15px #000;left:34.00px;">Colbert County</div>
<div class="t " style="top:572.81px;font-size:12.8px;line-height:17px;letter-spacing:0.330px;color:#000;-webkit-text-stroke:0.15px #000;left:258.00px;">Alabama</div>
<div class="t " style="top:572.81px;font-size:12.8px;line-height:17px;letter-spacing:-0.049px;color:#000;-webkit-text-stroke:0.15px #000;right:884.65px;">54521</div>
<div class="t " style="top:572.81px;font-size:12.8px;line-height:17px;letter-spacing:-0.049px;color:#000;-webkit-text-stroke:0.15px #000;right:805.65px;">54460</div>
<div class="t " style="top:572.81px;font-size:12.8px;line-height:17px;letter-spacing:-0.049px;color:#000;-webkit-text-stroke:0.15px #000;right:725.65px;">54493</div>
<div class="t " style="top:572.81px;font-size:12.8px;line-height:17px;letter-spacing:-0.049px;color:#000;-webkit-text-stroke:0.15px #000;right:646.65px;">54456</div>
<div class="t " style="top:572.81px;font-size:12.8px;line-height:17px;letter-spacing:-0.049px;color:#000;-webkit-text-stroke:0.15px #000;right:566.65px;">54427</div>
<div class="t " style="top:572.81px;font-size:12.8px;line-height:17px;letter-spacing:-0.049px;color:#000;-webkit-text-stroke:0.15px #000;right:487.65px;">54295</div>
<div class="t " style="top:572.81px;font-size:12.8px;line-height:17px;letter-spacing:-0.049px;color:#000;-webkit-text-stroke:0.15px #000;right:407.65px;">54216</div>
<div class="t " style="top:591.87px;font-size:12.8px;line-height:17px;letter-spacing:0.304px;color:#000;-webkit-text-stroke:0.15px #000;left:34.00px;">Conecuh County</div>
<div class="t " style="top:591.87px;font-size:12.8px;line-height:17px;letter-spacing:0.330px;color:#000;-webkit-text-stroke:0.15px #000;left:258.00px;">Alabama</div>
<div class="t " style="top:591.87px;font-size:12.8px;line-height:17px;letter-spacing:-0.049px;color:#000;-webkit-text-stroke:0.15px #000;right:884.65px;">13209</div>
<div class="t " style="top:591.87px;font-size:12.8px;line-height:17px;letter-spacing:-0.049px;color:#000;-webkit-text-stroke:0.15px #000;right:805.65px;">13193</div>
<div class="t " style="top:591.87px;font-size:12.8px;line-height:17px;letter-spacing:-0.049px;color:#000;-webkit-text-stroke:0.15px #000;right:725.65px;">13007</div>
<div class="t " style="top:591.87px;font-size:12.8px;line-height:17px;letter-spacing:-0.049px;color:#000;-webkit-text-stroke:0.15px #000;right:646.65px;">12866</div>
<div class="t " style="top:591.87px;font-size:12.8px;line-height:17px;letter-spacing:-0.049px;color:#000;-webkit-text-stroke:0.15px #000;right:566.65px;">12621</div>
<div class="t " style="top:591.87px;font-size:12.8px;line-height:17px;letter-spacing:-0.049px;color:#000;-webkit-text-stroke:0.15px #000;right:487.65px;">12597</div>
<div class="t " style="top:591.87px;font-size:12.8px;line-height:17px;letter-spacing:-0.049px;color:#000;-webkit-text-stroke:0.15px #000;right:407.65px;">12395</div>
<div class="t " style="top:610.92px;font-size:12.8px;line-height:17px;letter-spacing:0.244px;color:#000;-webkit-text-stroke:0.15px #000;left:34.00px;">Coosa County</div>
<div class="t " style="top:610.92px;font-size:12.8px;line-height:17px;letter-spacing:0.330px;color:#000;-webkit-text-stroke:0.15px #000;left:258.00px;">Alabama</div>
<div class="t " style="top:610.92px;font-size:12.8px;line-height:17px;letter-spacing:0.189px;color:#000;-webkit-text-stroke:0.15px #000;right:884.41px;">11758</div>
<div class="t " style="top:610.92px;font-size:12.8px;line-height:17px;letter-spacing:0.189px;color:#000;-webkit-text-stroke:0.15px #000;right:805.41px;">11369</div>
<div class="t " style="top:610.92px;font-size:12.8px;line-height:17px;letter-spacing:0.189px;color:#000;-webkit-text-stroke:0.15px #000;right:725.41px;">11201</div>
<div class="t " style="top:610.92px;font-size:12.8px;line-height:17px;letter-spacing:0.189px;color:#000;-webkit-text-stroke:0.15px #000;right:646.41px;">11058</div>
<div class="t " style="top:610.92px;font-size:12.8px;line-height:17px;letter-spacing:-0.049px;color:#000;-webkit-text-stroke:0.15px #000;right:566.65px;">10794</div>
<div class="t " style="top:610.92px;font-size:12.8px;line-height:17px;letter-spacing:-0.049px;color:#000;-webkit-text-stroke:0.15px #000;right:487.65px;">10687</div>
<div class="t " style="top:610.92px;font-size:12.8px;line-height:17px;letter-spacing:-0.049px;color:#000;-webkit-text-stroke:0.15px #000;right:407.65px;">10581</div>
<div class="t " style="top:231.72px;font-size:11.5px;line-height:15px;color:#3a4658;left:-279.50px;width:600px;text-align:center;">1</div>
<div class="t " style="top:250.77px;font-size:11.5px;line-height:15px;color:#3a4658;left:-279.50px;width:600px;text-align:center;">2</div>
<div class="t " style="top:269.82px;font-size:11.5px;line-height:15px;color:#1e7145;left:-279.50px;width:600px;text-align:center;">3</div>
<div class="t " style="top:288.87px;font-size:11.5px;line-height:15px;color:#1e7145;left:-279.50px;width:600px;text-align:center;">4</div>
<div class="t " style="top:307.92px;font-size:11.5px;line-height:15px;color:#1e7145;left:-279.50px;width:600px;text-align:center;">5</div>
<div class="t " style="top:326.97px;font-size:11.5px;line-height:15px;color:#1e7145;left:-279.50px;width:600px;text-align:center;">6</div>
<div class="t " style="top:346.02px;font-size:11.5px;line-height:15px;color:#1e7145;left:-279.50px;width:600px;text-align:center;">7</div>
<div class="t " style="top:365.07px;font-size:11.5px;line-height:15px;color:#1e7145;left:-279.50px;width:600px;text-align:center;">8</div>
<div class="t " style="top:384.12px;font-size:11.5px;line-height:15px;color:#1e7145;left:-279.50px;width:600px;text-align:center;">9</div>
<div class="t " style="top:403.17px;font-size:11.5px;line-height:15px;color:#1e7145;left:-279.50px;width:600px;text-align:center;">10</div>
<div class="t " style="top:422.22px;font-size:11.5px;line-height:15px;color:#1e7145;left:-279.50px;width:600px;text-align:center;">11</div>
<div class="t " style="top:441.27px;font-size:11.5px;line-height:15px;color:#1e7145;left:-279.50px;width:600px;text-align:center;">12</div>
<div class="t " style="top:460.32px;font-size:11.5px;line-height:15px;color:#1e7145;left:-279.50px;width:600px;text-align:center;">13</div>
<div class="t " style="top:479.37px;font-size:11.5px;line-height:15px;color:#1e7145;left:-279.50px;width:600px;text-align:center;">14</div>
<div class="t " style="top:498.42px;font-size:11.5px;line-height:15px;color:#1e7145;left:-279.50px;width:600px;text-align:center;">15</div>
<div class="t " style="top:517.47px;font-size:11.5px;line-height:15px;color:#1e7145;left:-279.50px;width:600px;text-align:center;">16</div>
<div class="t " style="top:536.52px;font-size:11.5px;line-height:15px;color:#1e7145;left:-279.50px;width:600px;text-align:center;">17</div>
<div class="t " style="top:555.57px;font-size:11.5px;line-height:15px;color:#1e7145;left:-279.50px;width:600px;text-align:center;">18</div>
<div class="t " style="top:574.62px;font-size:11.5px;line-height:15px;color:#1e7145;left:-279.50px;width:600px;text-align:center;">19</div>
<div class="t " style="top:593.67px;font-size:11.5px;line-height:15px;color:#1e7145;left:-279.50px;width:600px;text-align:center;">20</div>
<div class="t " style="top:612.72px;font-size:11.5px;line-height:15px;color:#1e7145;left:-279.50px;width:600px;text-align:center;">21</div>
<svg class="b" style="left:38px;top:67.5px;" width="30" height="34" viewBox="0 0 30 34" fill="none"><path d="M1.5 6.5V25H21V6.5Z" fill="#f6f6f6"/><ellipse cx="11.5" cy="6.5" rx="10" ry="5" stroke="#3b3b3b" stroke-width="1.1" fill="#fbfbfb"/>
<path d="M1.5 6.5 V24.5 C1.5 27 5 29 10.5 29.6 M21.5 6.5 V14.5" stroke="#3b3b3b" stroke-width="1.1"/>
<rect x="12.5" y="15.5" width="15" height="14" fill="#fff" stroke="#3b3b3b" stroke-width="1.1"/>
<path d="M12.5 19.5 H27.5 M12.5 24.5 H27.5 M17.5 19.5 V29.5 M22.5 19.5 V29.5" stroke="#3b3b3b" stroke-width="1"/>
<rect x="12.5" y="15.5" width="15" height="4" fill="#3b3b3b" opacity=".35"/></svg>
<div class="t " style="top:100.90px;font-size:12.3px;line-height:16px;letter-spacing:-1.413px;color:#2b2b2b;left:41.00px;">Get</div>
<div class="t " style="top:116.90px;font-size:12.3px;line-height:16px;letter-spacing:-0.827px;color:#2b2b2b;left:32.50px;">Data</div>
<svg class="b" style="left:59.0px;top:122.5px;" width="7" height="5" viewBox="0 0 7 5" fill="none"><path d="M0.8 0.9 L3.5 3.6 L6.2 0.9" stroke="#333" stroke-width="1.2"/></svg>
<svg class="b" style="left:76.7px;top:67.5px;" width="17" height="18" viewBox="0 0 17 18" fill="none"><path d="M1.6 1.1 H8 L13.4 6.5 V16 H1.6 Z M8 1.1 V6.5 H13.4" stroke="#3b3b3b" stroke-width="1.05" fill="#fbfbfb"/><rect x="8.5" y="8" width="6.6" height="8" fill="#fff" stroke="#3b3b3b" stroke-width="1"/><path d="M10.2 10.2H13.4M10.2 12H13.4M10.2 13.8H13.4" stroke="#3b3b3b" stroke-width=".8"/></svg>
<div class="t " style="top:69.00px;font-size:12.3px;line-height:16px;letter-spacing:-0.638px;color:#2b2b2b;left:96.00px;">From Text/CSV</div>
<svg class="b" style="left:76.7px;top:93.2px;" width="17" height="18" viewBox="0 0 17 18" fill="none"><path d="M1.6 1.1 H8 L13.4 6.5 V16 H1.6 Z M8 1.1 V6.5 H13.4" stroke="#3b3b3b" stroke-width="1.05" fill="#fbfbfb"/><circle cx="10.7" cy="11.6" r="5.3" fill="#fff"/><circle cx="10.7" cy="11.6" r="4.5" fill="#1a86d8"/><path d="M6.5 11.6H15M10.7 7.3V16M8.6 8.3C7.6 10.5 7.6 12.7 8.6 14.9M12.8 8.3C13.8 10.5 13.8 12.7 12.8 14.9" stroke="#fff" stroke-width=".6"/></svg>
<div class="t " style="top:94.90px;font-size:12.3px;line-height:16px;letter-spacing:-0.455px;color:#2b2b2b;left:96.00px;">From Web</div>
<svg class="b" style="left:75.2px;top:119.2px;" width="17" height="16" viewBox="0 0 17 16" fill="none"><rect x="1.5" y="1.5" width="13.6" height="13.4" stroke="#3b3b3b" stroke-width="1.05" fill="#fff"/><path d="M1.5 5.5H15M1.5 8.5H15M1.5 11.6H15M8.3 5.5V14.9" stroke="#3b3b3b" stroke-width="1"/><rect x="3.3" y="2.7" width="3.2" height="1.5" fill="#1a86d8"/><rect x="10" y="2.7" width="3.2" height="1.5" fill="#1a86d8"/></svg>
<div class="t " style="top:120.10px;font-size:12.3px;line-height:16px;letter-spacing:-0.464px;color:#2b2b2b;left:96.00px;">From Table/Range</div>
<svg class="b" style="left:204px;top:68px;" width="18" height="17" viewBox="0 0 18 17" fill="none"><rect x="1.5" y="1.5" width="14" height="12" stroke="#3b3b3b" stroke-width="1.05" fill="#fff"/><path d="M1.5 5H15.5M1.5 8.5H15.5M6 1.5V13.5M10.5 1.5V13.5" stroke="#3b3b3b" stroke-width=".9"/><rect x="6" y="8" width="11.5" height="8.8" fill="#fff"/><path d="M7 9.3H9.5L10.3 8.2H13.2L14 9.3H16.5V16H7Z" fill="#1a86d8" stroke="#1a86d8" stroke-width="1" stroke-linejoin="round"/><circle cx="11.75" cy="12.6" r="2.1" fill="#fff"/><circle cx="11.75" cy="12.6" r="0.9" fill="#1a86d8"/></svg>
<div class="t " style="top:69.00px;font-size:12.3px;line-height:16px;letter-spacing:-0.445px;color:#2b2b2b;left:224.50px;">From Picture</div>
<svg class="b" style="left:293.0px;top:74.0px;" width="7" height="5" viewBox="0 0 7 5" fill="none"><path d="M0.8 0.9 L3.5 3.6 L6.2 0.9" stroke="#333" stroke-width="1.2"/></svg>
<svg class="b" style="left:205px;top:93.2px;" width="17" height="18" viewBox="0 0 17 18" fill="none"><path d="M1.6 1.1 H8 L13.4 6.5 V16 H1.6 Z M8 1.1 V6.5 H13.4" stroke="#3b3b3b" stroke-width="1.05" fill="#fbfbfb"/><circle cx="10.8" cy="11.8" r="4" fill="#fff" stroke="#1a86d8" stroke-width="1.1"/><path d="M10.8 9.5V12H12.8" stroke="#1a86d8" stroke-width="1"/></svg>
<div class="t " style="top:94.90px;font-size:12.3px;line-height:16px;letter-spacing:-0.809px;color:#2b2b2b;left:224.50px;">Recent Sources</div>
<svg class="b" style="left:205px;top:118.7px;" width="17" height="18" viewBox="0 0 17 18" fill="none"><path d="M1.6 1.1 H8 L13.4 6.5 V16 H1.6 Z M8 1.1 V6.5 H13.4" stroke="#3b3b3b" stroke-width="1.05" fill="#fbfbfb"/><path d="M7.5 9.5C7.5 8 13.5 8 13.5 9.5V14.5C13.5 16 7.5 16 7.5 14.5Z" fill="#fff" stroke="#e8772e" stroke-width="1.1"/><path d="M7.5 9.8C7.5 11.2 13.5 11.2 13.5 9.8" stroke="#e8772e" stroke-width="1"/></svg>
<div class="t " style="top:120.10px;font-size:12.3px;line-height:16px;letter-spacing:-0.466px;color:#2b2b2b;left:224.50px;">Existing Connections</div>
<div class="t " style="top:142.37px;font-size:10.8px;line-height:14px;letter-spacing:-0.318px;color:#444;left:134.50px;">Get &amp; Transform Data</div>
<svg class="b" style="left:363px;top:68px;" width="32" height="32" viewBox="0 0 32 32" fill="none"><path d="M3.4 26.3V1.4H16.3" stroke="#3b3b3b" stroke-width="1.1"/><path d="M6.7 28.1V4.5H17.7L24.6 10.7V13.5H14V28.1Z" fill="#f8f8f8"/><path d="M12.9 28.1H6.7V4.5H17.7L24.6 10.7V13.7M17.7 4.5V10.7H24.6" stroke="#3b3b3b" stroke-width="1.1"/><path d="M15.9 21.1A6.9 6.9 0 0 1 29.2 21.3M29.7 17.3V22.1H24.9M29.2 24.9A6.9 6.9 0 0 1 15.9 25.1M15.3 29.3V24.5H20.1" stroke="#38a852" stroke-width="1.5"/></svg>
<div class="t " style="top:103.00px;font-size:12.3px;line-height:16px;letter-spacing:-1.045px;color:#2b2b2b;left:358.50px;">Refresh</div>
<div class="t " style="top:118.60px;font-size:12.3px;line-height:16px;letter-spacing:-0.685px;color:#2b2b2b;left:365.40px;">All</div>
<svg class="b" style="left:381.5px;top:123.5px;" width="7" height="5" viewBox="0 0 7 5" fill="none"><path d="M0.8 0.9 L3.5 3.6 L6.2 0.9" stroke="#333" stroke-width="1.2"/></svg>
<svg class="b" style="left:403px;top:68px;" width="18" height="16" viewBox="0 0 18 16" fill="none"><rect x="2" y="2" width="14.5" height="12.3" stroke="#3b3b3b" stroke-width="1.1" fill="#fbfbfb"/><path d="M2 3.2H16.5" stroke="#3b3b3b" stroke-width="1.6"/><path d="M11.4 4V14" stroke="#1a86d8" stroke-width="1.1"/><path d="M13 6.6H15M13 8.7H15M13 10.8H15" stroke="#1a86d8" stroke-width="1"/></svg>
<div class="t " style="top:69.00px;font-size:12.3px;line-height:16px;letter-spacing:-0.399px;color:#2b2b2b;left:424.00px;">Queries &amp; Connections</div>
<svg class="b" style="left:405px;top:93px;" width="14" height="18" viewBox="0 0 14 18" fill="none"><rect x="1.5" y="1.5" width="11" height="15" stroke="#c6c6c6" stroke-width="1.1" fill="#f3f3f3"/><rect x="3.8" y="5" width="2.4" height="2.4" stroke="#bdbdbd" stroke-width=".9"/><rect x="3.8" y="10" width="2.4" height="2.4" stroke="#bdbdbd" stroke-width=".9"/><path d="M7.8 6.2H10.2M7.8 11.2H10.2" stroke="#bdbdbd" stroke-width="1"/></svg>
<div class="t " style="top:94.90px;font-size:12.3px;line-height:16px;letter-spacing:-0.507px;color:#b9b9b9;left:424.00px;">Properties</div>
<svg class="b" style="left:404.8px;top:118.7px;" width="17" height="18" viewBox="0 0 17 18" fill="none"><path d="M1.6 1.1 H8 L13.4 6.5 V16 H1.6 Z M8 1.1 V6.5 H13.4" stroke="#3b3b3b" stroke-width="1.05" fill="#fbfbfb"/><rect x="4" y="9" width="12.5" height="8.5" fill="#fff"/><rect x="5" y="10.2" width="7.6" height="4.2" rx="2.1" stroke="#1a86d8" stroke-width="1.25"/><rect x="8.2" y="12.6" width="7.6" height="4.2" rx="2.1" stroke="#1a86d8" stroke-width="1.25"/></svg>
<div class="t " style="top:120.10px;font-size:12.3px;line-height:16px;letter-spacing:-0.329px;color:#2b2b2b;left:424.00px;">Workbook Links</div>
<div class="t " style="top:142.37px;font-size:10.8px;line-height:14px;letter-spacing:-0.278px;color:#444;left:400.00px;">Queries &amp; Connections</div>
<div class="b " style="left:568px;top:71px;width:170px;height:60px;border:1px solid #dcdcdc;border-radius:5px;background:#fff"></div>
<div class="b " style="left:722px;top:71px;width:1px;height:60px;background:#e6e6e6"></div>
<div class="b " style="left:722px;top:91px;width:16px;height:40px;border:1px solid #b8b8b8;border-radius:0 0 4px 0;background:#fff"></div>
<div class="b " style="left:722px;top:110px;width:16px;height:1px;background:#b8b8b8"></div>
<svg class="b" style="left:726px;top:78px;" width="8" height="6" viewBox="0 0 8 6" fill="none"><path d="M1 4.5 L4 1.5 L7 4.5" stroke="#c8c8c8" stroke-width="1.1"/></svg>
<svg class="b" style="left:726.5px;top:98.5px;" width="7" height="5" viewBox="0 0 7 5" fill="none"><path d="M0.8 0.9 L3.5 3.6 L6.2 0.9" stroke="#333" stroke-width="1.2"/></svg>
<svg class="b" style="left:726px;top:115px;" width="8" height="10" viewBox="0 0 8 10" fill="none"><path d="M1 1.5H7" stroke="#333" stroke-width="1.2"/><path d="M1.2 4.5 L4 7.3 L6.8 4.5" stroke="#333" stroke-width="1.2"/></svg>
<svg class="b" style="left:592px;top:80px;" width="31" height="26" viewBox="0 0 31 26" fill="none"><path d="M2.8 9.6L15.6 1.9L28.4 9.6Z" stroke="#3b3b3b" stroke-width="1.1" stroke-linejoin="round" fill="#fbfbfb"/><path d="M4.9 10.2V21.9M10.5 10.2V21.9M15.6 10.2V21.9M20.6 10.2V21.9M26 10.2V21.9" stroke="#3b3b3b" stroke-width="1.1"/><path d="M4.9 21.9H26L28.4 24.6H2.8Z" stroke="#3b3b3b" stroke-width="1.1" stroke-linejoin="round"/></svg>
<div class="t " style="top:110.00px;font-size:12.3px;line-height:16px;letter-spacing:-0.782px;color:#2b2b2b;left:591.00px;">Stocks</div>
<svg class="b" style="left:668px;top:81px;" width="36" height="28" viewBox="0 0 36 28" fill="none"><rect x="2.2" y="3.6" width="27.5" height="17.3" stroke="#3b3b3b" stroke-width="1.3" fill="#f6f6f6"/><path d="M7.6 6H5V18.5H7.6M24.4 6H27V12" stroke="#3b3b3b" stroke-width="1"/><ellipse cx="15.6" cy="11.9" rx="4.6" ry="6.5" stroke="#3b3b3b" stroke-width="1.1" fill="#fff"/><path d="M16.8 16.9H32.4V24.5C32.4 28 16.8 28 16.8 24.5Z" fill="#fff"/><ellipse cx="24.6" cy="16.9" rx="7" ry="2.5" stroke="#3b3b3b" stroke-width="1.1" fill="#fff"/><path d="M17.6 16.9V24.3C17.6 25.8 20.7 26.9 24.6 26.9S31.6 25.8 31.6 24.3V16.9M17.6 19.4C17.6 20.9 20.7 22 24.6 22S31.6 20.9 31.6 19.4M17.6 21.9C17.6 23.4 20.7 24.5 24.6 24.5S31.6 23.4 31.6 21.9" stroke="#3b3b3b" stroke-width="1.1"/></svg>
<div class="t " style="top:110.00px;font-size:12.3px;line-height:16px;letter-spacing:-0.663px;color:#2b2b2b;left:657.00px;">Currencies</div>
<div class="t " style="top:142.37px;font-size:10.8px;line-height:14px;letter-spacing:-0.604px;color:#444;left:629.00px;">Data Types</div>
<svg class="b" style="left:760px;top:75px" width="20" height="19" viewBox="0 0 20 19" fill="none"><text x="0" y="8.2" font-family="Liberation Sans" font-size="9.4" font-weight="bold" fill="#1a86d8">A</text><text x="0.2" y="17.2" font-family="Liberation Sans" font-size="9.4" font-weight="bold" fill="#3b3b3b">Z</text><path d="M12.6 2.2V16.2M9 12.6L12.6 16.2L16.2 12.6" stroke="#3b3b3b" stroke-width="1.15"/></svg>
<svg class="b" style="left:760px;top:106px" width="20" height="19" viewBox="0 0 20 19" fill="none"><text x="0" y="8.2" font-family="Liberation Sans" font-size="9.4" font-weight="bold" fill="#3b3b3b">Z</text><text x="0.2" y="17.2" font-family="Liberation Sans" font-size="9.4" font-weight="bold" fill="#1a86d8">A</text><path d="M12.6 2.2V16.2M9 12.6L12.6 16.2L16.2 12.6" stroke="#3b3b3b" stroke-width="1.15"/></svg>
<svg class="b" style="left:787px;top:68px" width="30" height="30" viewBox="0 0 30 30" fill="none"><rect x="1.5" y="1.5" width="27" height="27" stroke="#3b3b3b" stroke-width="1.1" fill="#fff"/><rect x="1.5" y="1.5" width="27" height="4" fill="#bdbdbd" stroke="#3b3b3b" stroke-width="1.1"/><path d="M15 5.5V28.5" stroke="#3b3b3b" stroke-width="1.1"/><text x="4.3" y="16.3" font-family="Liberation Sans" font-size="11" fill="#3b3b3b">Z</text><text x="4" y="26.5" font-family="Liberation Sans" font-size="11" fill="#1a86d8">A</text><text x="18" y="16.3" font-family="Liberation Sans" font-size="11" fill="#1a86d8">A</text><text x="18.4" y="26.5" font-family="Liberation Sans" font-size="11" fill="#3b3b3b">Z</text></svg>
<div class="t " style="top:100.90px;font-size:12.3px;line-height:16px;letter-spacing:-0.353px;color:#2b2b2b;left:791.00px;">Sort</div>
<svg class="b" style="left:840px;top:68px;" width="31" height="30" viewBox="0 0 31 30" fill="none"><path d="M1.4 1.1H28.1V5.7L17.8 16.5V28.4H11.6V16.5L1.4 5.7Z" stroke="#3b3b3b" stroke-width="1.15" fill="#f8f8f8" stroke-linejoin="round"/></svg>
<div class="t " style="top:100.90px;font-size:12.3px;line-height:16px;letter-spacing:-0.567px;color:#2b2b2b;left:843.50px;">Filter</div>
<svg class="b" style="left:881px;top:68px;" width="18" height="18" viewBox="0 0 18 18" fill="none"><path d="M0.8 0.7H16V3.3L10.4 9.2V15.4H5.9V9.2L0.8 3.3Z" stroke="#c6c6c6" stroke-width="1.05" fill="#f6f6f6" stroke-linejoin="round"/><rect x="9" y="9" width="9" height="9" fill="#fff"/><path d="M10.5 10.5L16.5 16.5M16.5 10.5L10.5 16.5" stroke="#c6c6c6" stroke-width="1.1"/></svg>
<div class="t " style="top:69.00px;font-size:12.3px;line-height:16px;letter-spacing:-0.973px;color:#b9b9b9;left:901.50px;">Clear</div>
<svg class="b" style="left:881px;top:94px;" width="18" height="18" viewBox="0 0 18 18" fill="none"><path d="M0.8 0.7H16V3.3L10.4 9.2V15.4H5.9V9.2L0.8 3.3Z" stroke="#c6c6c6" stroke-width="1.05" fill="#f6f6f6" stroke-linejoin="round"/><rect x="8" y="8" width="10" height="10" fill="#fff"/><path d="M16.5 11.5A3.8 3.8 0 0 0 9.5 12.5M9.3 9.8V12.8H12.3M9.5 14.5A3.8 3.8 0 0 0 16.5 13.8M16.8 16.8V13.8H13.8" stroke="#c6c6c6" stroke-width="1"/></svg>
<div class="t " style="top:94.90px;font-size:12.3px;line-height:16px;letter-spacing:-0.688px;color:#b9b9b9;left:901.50px;">Reapply</div>
<svg class="b" style="left:881px;top:120px;" width="18" height="18" viewBox="0 0 18 18" fill="none"><path d="M0.8 0.7H16V3.3L10.4 9.2V15.4H5.9V9.2L0.8 3.3Z" stroke="#3b3b3b" stroke-width="1.05" fill="#f6f6f6" stroke-linejoin="round"/><rect x="8.5" y="8.5" width="10" height="10" fill="#fff"/><circle cx="13.3" cy="13.5" r="2.6" stroke="#1a86d8" stroke-width="1.6"/><path d="M13.3 9.2V17.8M9.6 11.4L17 15.6M9.6 15.6L17 11.4" stroke="#1a86d8" stroke-width="1.3"/><circle cx="13.3" cy="13.5" r="1.1" fill="#fff"/></svg>
<div class="t " style="top:120.10px;font-size:12.3px;line-height:16px;letter-spacing:-0.530px;color:#2b2b2b;left:901.50px;">Advanced</div>
<div class="t " style="top:142.37px;font-size:10.8px;line-height:14px;letter-spacing:-0.168px;color:#444;left:830.50px;">Sort &amp; Filter</div>
<svg class="b" style="left:984px;top:68px;" width="36" height="32" viewBox="0 0 36 32" fill="none"><path d="M6.3 5.4H17.9M6.3 9.3H17.9M10.1 13.1H17.9" stroke="#3b3b3b" stroke-width="1.1"/><path d="M8 13.6C1.5 15 0.8 24.5 9 24.5H14M10.1 19.9L14.7 24.5L10.1 29.3" stroke="#1a86d8" stroke-width="1.35"/><rect x="22.3" y="1.4" width="9.4" height="26.7" stroke="#3b3b3b" stroke-width="1.1" fill="#fbfbfb"/><path d="M22.3 10.5H31.7M22.3 19.4H31.7" stroke="#3b3b3b" stroke-width="1.1"/><path d="M25.1 5.7H29M25.1 14.2H29M25.1 23.2H29" stroke="#1a86d8" stroke-width="1.3"/></svg>
<div class="t " style="top:100.90px;font-size:12.3px;line-height:16px;letter-spacing:-0.456px;color:#2b2b2b;left:985.50px;">Text to</div>
<div class="t " style="top:116.90px;font-size:12.3px;line-height:16px;letter-spacing:-0.506px;color:#2b2b2b;left:979.50px;">Columns</div>
<svg class="b" style="left:1032px;top:67px;" width="19" height="18" viewBox="0 0 19 18" fill="none"><rect x="2.5" y="3.2" width="14.5" height="12.3" stroke="#c6c6c6" stroke-width="1.05" fill="#f4f4f4"/><path d="M2.5 7.4H17M2.5 11.5H17M7.3 3.2V15.5M12.2 3.2V15.5" stroke="#c6c6c6" stroke-width="1"/><path d="M8.7 0L2.2 8.6H5.6L3.4 13.5L10.6 5.4H7.2L9.8 0Z" fill="#fff"/><path d="M8.2 0.4L3.4 7.8H6.2L4.6 11.8L9.6 5.8H6.8L9 0.4Z" fill="#c6c6c6"/></svg>
<div class="t " style="top:69.00px;font-size:12.3px;line-height:16px;letter-spacing:-0.690px;color:#b9b9b9;left:1054.00px;">Flash Fill</div>
<svg class="b" style="left:1033px;top:93.5px;" width="19" height="18" viewBox="0 0 19 18" fill="none"><rect x="3.5" y="1" width="11" height="14.6" stroke="#3b3b3b" stroke-width="1" fill="#fff"/><rect x="3.5" y="1" width="11" height="5.6" fill="#6db0ea" stroke="#1f6fc0" stroke-width="1.1"/><path d="M3.5 3.8H14.5" stroke="#1f6fc0" stroke-width=".9"/><rect x="3.5" y="10.2" width="5.2" height="5.4" fill="#2b88d8"/><rect x="9" y="8.3" width="9" height="9" fill="#fff"/><path d="M10.4 9.6L16.8 16.2M16.8 9.6L10.4 16.2" stroke="#e23b2e" stroke-width="1.4"/></svg>
<div class="t " style="top:94.90px;font-size:12.3px;line-height:16px;letter-spacing:-0.509px;color:#2b2b2b;left:1054.00px;">Remove Duplicates</div>
<svg class="b" style="left:1032px;top:119px;" width="20" height="19" viewBox="0 0 20 19" fill="none"><path d="M8.2 2.8H2.4V8.2H8.2M8.2 10.6H2.4V15.6H8.2M4 5.5H7.5" stroke="#3b3b3b" stroke-width="1.1"/><path d="M9.4 3.6L12 6.2L17.4 0.9" stroke="#33a852" stroke-width="1.4"/><circle cx="13.2" cy="12.3" r="3.6" stroke="#e23b2e" stroke-width="1.4" fill="#fff"/><path d="M10.7 9.8L15.7 14.8" stroke="#e23b2e" stroke-width="1.4"/></svg>
<div class="t " style="top:120.10px;font-size:12.3px;line-height:16px;letter-spacing:-0.286px;color:#2b2b2b;left:1054.00px;">Data Validation</div>
<svg class="b" style="left:1144.0px;top:125.5px;" width="7" height="5" viewBox="0 0 7 5" fill="none"><path d="M0.8 0.9 L3.5 3.6 L6.2 0.9" stroke="#333" stroke-width="1.2"/></svg>
<svg class="b" style="left:1166px;top:68px;" width="19" height="17" viewBox="0 0 19 17" fill="none"><path d="M7.9 4V1.4H1.1V6.1H2.6M7.9 10.8V13.4H1.1V8.8H2.6" stroke="#3b3b3b" stroke-width="1.1"/><path d="M2.2 7.45H8.1M6 5.3L8.1 7.45L6 9.6" stroke="#1a86d8" stroke-width="1.1"/><rect x="10.3" y="5.3" width="6.5" height="4.3" stroke="#1a86d8" stroke-width="1.2" fill="#eaf3fc"/><path d="M12.2 7.45H15" stroke="#3b3b3b" stroke-width=".9"/></svg>
<div class="t " style="top:69.00px;font-size:12.3px;line-height:16px;letter-spacing:-0.346px;color:#2b2b2b;left:1187.50px;">Consolidate</div>
<svg class="b" style="left:1166px;top:93px;" width="19" height="18" viewBox="0 0 19 18" fill="none"><rect x="1.5" y="5.5" width="6" height="6" stroke="#c6c6c6" stroke-width="1.1" fill="#eee"/><rect x="10.5" y="1.5" width="6.5" height="6.5" stroke="#c6c6c6" stroke-width="1.1" fill="#eee"/><rect x="10.5" y="10.5" width="6.5" height="6.5" stroke="#c6c6c6" stroke-width="1.1" fill="#eee"/><path d="M7.5 8.5H9V4.5H10.5M9 8.5V13.5H10.5" stroke="#c6c6c6" stroke-width="1"/></svg>
<div class="t " style="top:94.90px;font-size:12.3px;line-height:16px;letter-spacing:-0.529px;color:#b9b9b9;left:1187.50px;">Relationships</div>
<svg class="b" style="left:1166px;top:119px;" width="19" height="18" viewBox="0 0 19 18" fill="none"><path d="M5 3.5L12 1L17.5 3.5V14.5L12 17L5 14.5Z" fill="#5fb233" stroke="#3f8f1d" stroke-width="1"/><rect x="1" y="5" width="9" height="9" rx="1" fill="#3f9a22"/><rect x="10.5" y="5.5" width="6" height="8" fill="#fff" opacity=".9"/><path d="M10.5 8H16.5M10.5 10.8H16.5M13.5 5.5V13.5" stroke="#3f8f1d" stroke-width=".8"/><path d="M3.5 7.5V11.5M3.5 7.5H7M7 7.5V10.5" stroke="#fff" stroke-width="1"/></svg>
<div class="t " style="top:120.10px;font-size:12.3px;line-height:16px;letter-spacing:-0.298px;color:#2b2b2b;left:1187.50px;">Manage Data Model</div>
<div class="t " style="top:142.37px;font-size:10.8px;line-height:14px;letter-spacing:-0.537px;color:#444;left:1116.50px;">Data Tools</div>
<div class="b " style="left:467.5px;top:277.5px;width:577.0px;height:264.0px;background:#f0f0f0;border-radius:8px;border:1px solid #a3a3a3;box-shadow:0 28px 44px rgba(0,0,0,.28),0 2px 14px rgba(0,0,0,.20)"></div>
<div class="b " style="left:468.5px;top:278.5px;width:575.0px;height:28.5px;background:#f3f3f3;border-radius:7px 7px 0 0"></div>
<div class="t " style="top:284.05px;font-size:11.6px;line-height:15px;letter-spacing:-0.091px;color:#1b1b1b;left:475.00px;">Sort</div>
<div class="t " style="top:284.48px;font-size:12.5px;line-height:16px;color:#1b1b1b;left:972.50px;">?</div>
<svg class="b" style="left:1015px;top:286px;" width="12" height="12" viewBox="0 0 12 12" fill="none"><path d="M1 1L11 11M11 1L1 11" stroke="#1b1b1b" stroke-width="1.1"/></svg>
<div class="b " style="left:474.8px;top:314px;width:78.69999999999999px;height:24px;background:#fdfdfd;border:1px solid #d2d2d2;border-bottom-color:#bdbdbd;border-radius:4px;"></div>
<div class="b " style="left:557px;top:314px;width:90px;height:24px;background:#fdfdfd;border:1px solid #d2d2d2;border-bottom-color:#bdbdbd;border-radius:4px;"></div>
<div class="b " style="left:650px;top:314px;width:85px;height:24px;background:#fdfdfd;border:1px solid #d2d2d2;border-bottom-color:#bdbdbd;border-radius:4px;"></div>
<div class="b " style="left:740px;top:314px;width:23px;height:24px;background:#fdfdfd;border:1px solid #d2d2d2;border-bottom-color:#bdbdbd;border-radius:4px;"></div>
<div class="b " style="left:767px;top:314px;width:23px;height:24px;background:#fdfdfd;border:1px solid #d2d2d2;border-bottom-color:#bdbdbd;border-radius:4px;"></div>
<div class="b " style="left:794px;top:314px;width:59px;height:24px;background:#fdfdfd;border:1px solid #d2d2d2;border-bottom-color:#bdbdbd;border-radius:4px;"></div>
<svg class="b" style="left:482px;top:319.5px;" width="15" height="15" viewBox="0 0 15 15" fill="none"><path d="M7.5 0.5V14.5M0.5 7.5H14.5" stroke="#2e9e44" stroke-width="1.4"/></svg>
<div class="t " style="top:319.87px;font-size:10.8px;line-height:14px;letter-spacing:-0.442px;color:#1b1b1b;left:500.50px;"><span class="u">A</span>dd Level</div>
<svg class="b" style="left:566px;top:320px;" width="13" height="13" viewBox="0 0 13 13" fill="none"><path d="M1 1L12 12M12 1L1 12" stroke="#e23b3b" stroke-width="1.2"/></svg>
<div class="t " style="top:319.87px;font-size:10.8px;line-height:14px;letter-spacing:-0.458px;color:#1b1b1b;left:583.50px;"><span class="u">D</span>elete Level</div>
<svg class="b" style="left:657px;top:318px;" width="18" height="17" viewBox="0 0 18 17" fill="none"><path d="M4.5 13.5H1.5V1.5H8.5V3" stroke="#333" stroke-width="1.1"/><path d="M5.5 4.5H11.5L15.5 8.5V15.5H5.5Z M11.5 4.5V8.5H15.5" stroke="#333" stroke-width="1.1" fill="#fdfdfd"/><path d="M8 10.5H13M8 12.8H13" stroke="#333" stroke-width="1"/></svg>
<div class="t " style="top:319.87px;font-size:10.8px;line-height:14px;letter-spacing:-0.504px;color:#1b1b1b;left:677.00px;"><span class="u">C</span>opy Level</div>
<div class="b " style="left:736.5px;top:313.5px;width:1.1000000000000227px;height:25.5px;background:#666"></div>
<svg class="b" style="left:746px;top:322px;" width="11" height="8" viewBox="0 0 11 8" fill="none"><path d="M1 6.2L5.5 1.7L10 6.2" stroke="#b4b4b4" stroke-width="1.1"/></svg>
<svg class="b" style="left:773px;top:323px;" width="11" height="8" viewBox="0 0 11 8" fill="none"><path d="M1 1.5L5.5 6L10 1.5" stroke="#b4b4b4" stroke-width="1.1"/></svg>
<div class="t " style="top:319.87px;font-size:10.8px;line-height:14px;letter-spacing:-0.414px;color:#1b1b1b;left:802.00px;"><span class="u">O</span>ptions...</div>
<div class="b " style="left:923.5px;top:319.5px;width:13.5px;height:13.5px;background:#1263c9;border-radius:3px"></div>
<svg class="b" style="left:925px;top:322px;" width="11" height="9" viewBox="0 0 11 9" fill="none"><path d="M2 4.6L4.6 7L9 2" stroke="#fff" stroke-width="1.1"/></svg>
<div class="t " style="top:319.87px;font-size:10.8px;line-height:14px;letter-spacing:-0.381px;color:#1b1b1b;left:943.00px;">My data has <span class="u">h</span>eaders</div>
<div class="b " style="left:474px;top:342px;width:565px;height:164.5px;background:#fff;border:1px solid #a6a6a6;border-top-color:#8f9aa8"></div>
<div class="b " style="left:665.5px;top:343px;width:1.0px;height:20px;background:#e3e3e3"></div>
<div class="b " style="left:855.5px;top:343px;width:1.0px;height:20px;background:#e3e3e3"></div>
<div class="t " style="top:347.37px;font-size:10.8px;line-height:14px;letter-spacing:-0.343px;color:#1b1b1b;left:479.50px;">Column</div>
<div class="t " style="top:347.37px;font-size:10.8px;line-height:14px;letter-spacing:-0.119px;color:#1b1b1b;left:669.50px;">Sort On</div>
<div class="t " style="top:347.37px;font-size:10.8px;line-height:14px;letter-spacing:-0.152px;color:#1b1b1b;left:859.00px;">Order</div>
<div class="b " style="left:476px;top:364px;width:562px;height:21px;background:#e6e6ec"></div>
<div class="b " style="left:846px;top:364px;width:10px;height:21px;background:#dadae2"></div>
<div class="t " style="top:364.87px;font-size:10.8px;line-height:14px;letter-spacing:-0.286px;color:#1b1b1b;left:477.50px;">Sort by</div>
<div class="b " style="left:523.5px;top:364.5px;width:132.89999999999998px;height:20.100000000000023px;background:#fff;border:1px solid #b9b9b9;border-bottom-color:#8c8c8c"></div>
<div class="b " style="left:638.5px;top:366px;width:16.399999999999977px;height:17.19999999999999px;background:#fdfdfd;border:1px solid #e2e2e2;border-radius:2px"></div>
<svg class="b" style="left:642.2px;top:372px;" width="9" height="6" viewBox="0 0 9 6" fill="none"><path d="M0.8 1L4.5 4.7L8.2 1" stroke="#555" stroke-width="1"/></svg>
<div class="b " style="left:667.5px;top:364.5px;width:178.5px;height:20.100000000000023px;background:#fff;border:1px solid #b9b9b9;border-bottom-color:#8c8c8c"></div>
<div class="b " style="left:828px;top:366px;width:16.5px;height:17.19999999999999px;background:#fdfdfd;border:1px solid #e2e2e2;border-radius:2px"></div>
<svg class="b" style="left:831.75px;top:372px;" width="9" height="6" viewBox="0 0 9 6" fill="none"><path d="M0.8 1L4.5 4.7L8.2 1" stroke="#555" stroke-width="1"/></svg>
<div class="b " style="left:856.5px;top:364.5px;width:179.5px;height:20.100000000000023px;background:#fff;border:1px solid #b9b9b9;border-bottom-color:#8c8c8c"></div>
<div class="b " style="left:1017.5px;top:366px;width:17.0px;height:17.19999999999999px;background:#fdfdfd;border:1px solid #e2e2e2;border-radius:2px"></div>
<svg class="b" style="left:1021.5px;top:372px;" width="9" height="6" viewBox="0 0 9 6" fill="none"><path d="M0.8 1L4.5 4.7L8.2 1" stroke="#555" stroke-width="1"/></svg>
<div class="b " style="left:525.2px;top:367px;width:111.59999999999991px;height:14.800000000000011px;background:#99c9ef;border:1px dotted #66788a"></div>
<div class="t " style="top:367.37px;font-size:10.8px;line-height:14px;letter-spacing:-0.236px;color:#0a2a4a;left:526.00px;">July 1 - 2010</div>
<div class="t " style="top:367.37px;font-size:10.8px;line-height:14px;letter-spacing:-0.333px;color:#1b1b1b;left:670.00px;">Cell Values</div>
<div class="t " style="top:367.37px;font-size:10.8px;line-height:14px;letter-spacing:-0.330px;color:#1b1b1b;left:860.00px;">Smallest to Largest</div>
<div class="b " style="left:881.3px;top:510.6px;width:73.30000000000007px;height:22.600000000000023px;background:#fdfdfd;border:1px solid #4a94e0;border-radius:4px;box-shadow:inset 0 0 0 1px #cfe3f7,0 0 0 .5px #9cc6f0"></div>
<div class="b " style="left:965.2px;top:510.9px;width:72.39999999999986px;height:22.100000000000023px;background:#fdfdfd;border:1px solid #d2d2d2;border-bottom-color:#bdbdbd;border-radius:4px"></div>
<div class="t " style="top:514.67px;font-size:10.8px;line-height:14px;letter-spacing:-1.604px;color:#1b1b1b;left:618.00px;width:600px;text-align:center;text-indent:-1.604px;">OK</div>
<div class="t " style="top:514.67px;font-size:10.8px;line-height:14px;letter-spacing:-0.524px;color:#1b1b1b;left:701.00px;width:600px;text-align:center;text-indent:-0.524px;">Cancel</div>
<div class="b " style="left:1040px;top:535px;width:1px;height:1px;background:#9a9a9a"></div>
<div class="b " style="left:1038px;top:537px;width:1px;height:1px;background:#9a9a9a"></div>
<div class="b " style="left:1040px;top:537px;width:1px;height:1px;background:#9a9a9a"></div>
<div class="b " style="left:1036px;top:539px;width:1px;height:1px;background:#9a9a9a"></div>
<div class="b " style="left:1038px;top:539px;width:1px;height:1px;background:#9a9a9a"></div>
<div class="b " style="left:1040px;top:539px;width:1px;height:1px;background:#9a9a9a"></div>
</div></div>
</body></html>
